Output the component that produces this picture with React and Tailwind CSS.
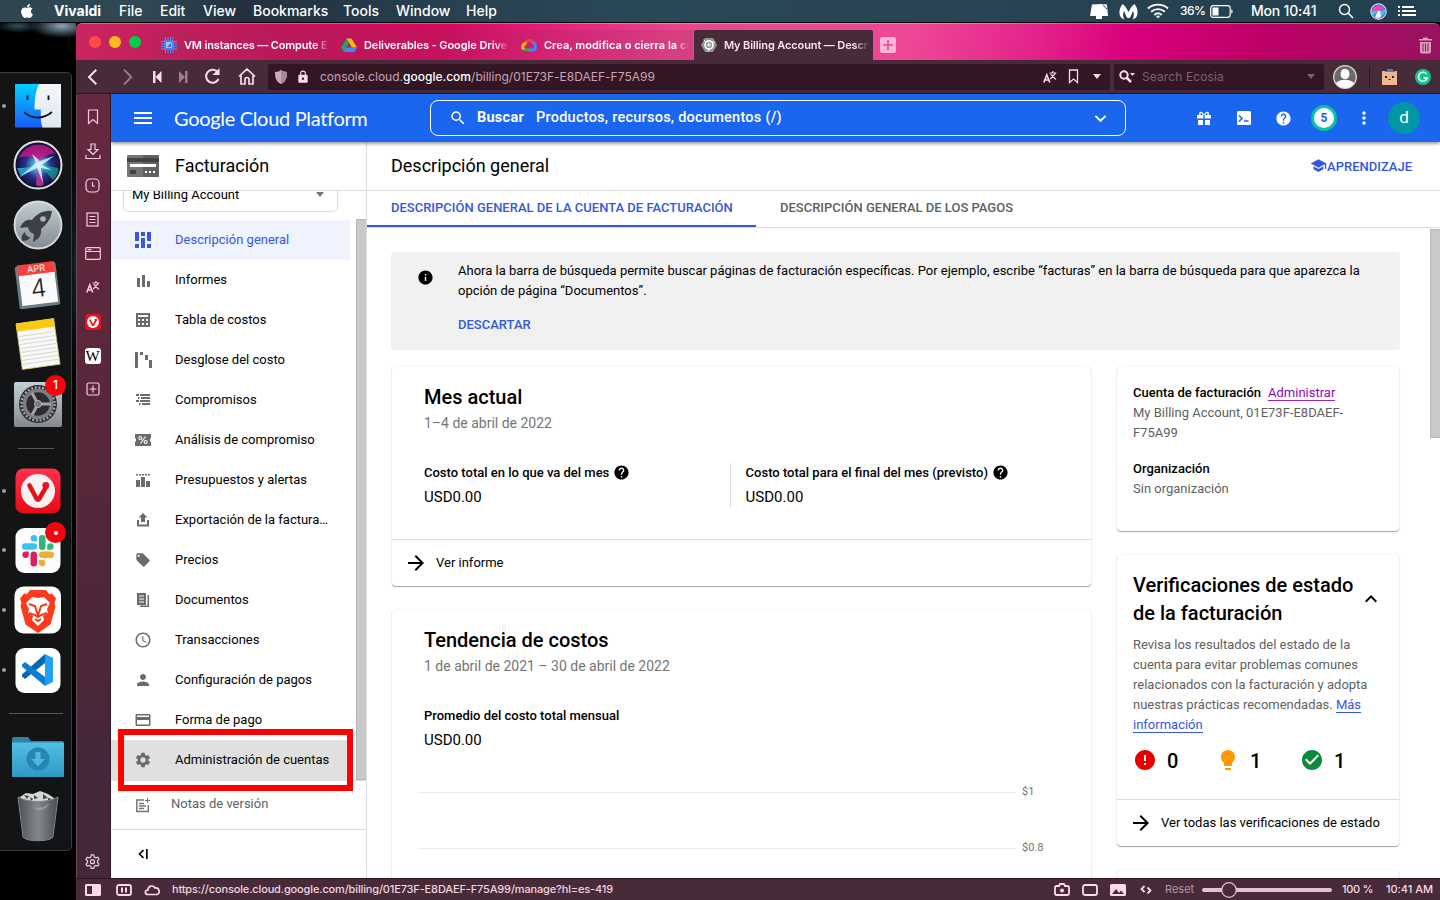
import React from "react";
import { FaApple } from "react-icons/fa";
import {
  MdAccessTime, MdArrowForward, MdCheckCircle, MdCreditCard, MdError,
  MdExpandLess, MdExpandMore, MdHelp, MdInfo, MdLightbulb, MdLocalOffer, MdLock, MdMenu,
  MdMoreVert, MdPerson, MdSchool, MdSearch, MdSettings,
} from "react-icons/md";

const Svg = ({ w = 18, h = w, vb, children, className = "" }) => (
  <svg width={w} height={h} viewBox={vb || `0 0 ${w} ${h}`} fill="currentColor" className={`block shrink-0 ${className}`}>{children}</svg>
);

/* ---------- macOS menu bar ---------- */
function MenuBar() {
  return (
    <div className="flex h-[23px] shrink-0 items-center border-b border-black bg-[linear-gradient(90deg,#2d4650_0%,#2f4954_10%,#232f3e_17%,#26404f_30%,#2a4856_45%,#284351_70%,#22404f_100%)] text-[14px] leading-[22px] font-medium text-white">
      <div className="flex w-[54px] justify-center"><FaApple size={16} /></div>
      <div className="w-[65px] font-bold">Vivaldi</div>
      <div className="w-[41px]">File</div>
      <div className="w-[43px]">Edit</div>
      <div className="w-[50px]">View</div>
      <div className="w-[90px]">Bookmarks</div>
      <div className="w-[53px]">Tools</div>
      <div className="w-[70px]">Window</div>
      <div className="w-[624px]">Help</div>
      <Svg w={18} h={16}><path d="M2 1.500 12 1 17 1.500 18 13H0Z" /><path d="m6 13h6v3H6z" /><path d="M13 1.500Q15 5 17 6" stroke="#2a4654" fill="none" /></Svg>
      <Svg w={19} h={17} className="ml-[11px]"><path d="M3.500 1C5.500 2 7.800 5.500 9.500 9 11.200 5.500 13.500 2 15.500 1 18 4 19 8 18.400 11.500 17.800 14 16 16 13.500 16.500 15.500 13.500 15 10 14 8c-1 2-2 5-3 6.500-1 .8-2 .8-3 0C7 13 6 10 5 8c-1 2-1.500 5.500.5 8.500C3 16 1.200 14 .6 11.500 0 8 1 4 3.500 1Z" /></Svg>
      <Svg w={22} h={16} className="ml-[9px]"><g fill="none" stroke="currentColor" strokeWidth="1.900"><path d="M1 5.500C6.500.3 15.500.3 21 5.500" /><path d="M4.200 8.800c3.900-3.600 9.700-3.600 13.600 0" /><path d="M7.300 12c2.200-2 5.200-2 7.400 0" /></g><path d="m11 15.500-2-2.200c1.200-1 2.800-1 4 0z" /></Svg>
      <div className="ml-[11px] w-[30px] text-[12px] tracking-[-0.5px]">36%</div>
      <Svg w={24} h={13}><rect x=".7" y=".7" width="19.500" height="11.600" rx="2.500" fill="none" stroke="currentColor" strokeWidth="1.200" /><rect x="2.500" y="2.500" width="6" height="8" /><path d="M21.300 4.500c1.800.5 1.800 3.500 0 4z" /></Svg>
      <div className="ml-[17px] w-[87px] tracking-[-0.2px]">Mon 10:41</div>
      <Svg w={16} h={16}><circle cx="6.500" cy="6.500" r="5" fill="none" stroke="currentColor" strokeWidth="1.400" /><path d="m10 10 5 5" stroke="currentColor" strokeWidth="1.600" /></Svg>
      <Svg w={17} h={17} className="ml-[16px]"><circle cx="8.500" cy="8.500" r="7.700" fill="#5a6fd8" stroke="#fff" /><path d="M2 8c2-6 10-7 12-2L9 8Z" fill="#f24ab4" /><path d="m9 8 6-1c0 4-3 7-6 7zM8 8 3 13C1 10 2 8 2 8Z" fill="#36c9e8" /><path d="m8 8 2 0 1 6-3 1-3-1Z" fill="#fff" /></Svg>
      <Svg w={19} h={12} className="ml-[11px]"><path d="M0 1h2v2H0zM4 1h12v2H4zM0 5h2v2H0zM4 5h14v2H4zM0 9h2v2H0zM4 9h14v2H4z" /></Svg>
    </div>
  );
}

/* ---------- Dock ---------- */
const Vmark = ({ cx, cy, s }) => (
  <g transform={`translate(${cx} ${cy}) scale(${s})`}>
    <path d="M-8.500-5.500-1.500 7.500Q0 10 1.500 7.500C3 4.500 5 1.500 7.500-3" fill="none" stroke="#e1141e" strokeWidth="4.600" strokeLinecap="round" strokeLinejoin="round" />
    <circle cx="7.800" cy="-5.500" r="3.400" fill="#e1141e" />
  </g>
);

const DockCell = ({ dot, children }) => (
  <div className="flex h-[59.6px] items-center">
    <span className={`ml-[2px] h-1 w-1 rounded-full ${dot ? "bg-[#9b9b9b]" : ""}`} />
    <div className="ml-[6px]">{children}</div>
  </div>
);

function Dock() {
  return (
    <div className="flex w-[76px] shrink-0 flex-col bg-black bg-[radial-gradient(ellipse_32px_12px_at_62px_3px,#86a6b6,transparent),radial-gradient(ellipse_22px_7px_at_18px_3px,#33505c,transparent),radial-gradient(ellipse_9px_120px_at_76px_240px,#10262c,transparent)] pt-[49px]">
      <div className="h-[779px] w-[72px] rounded-r-[5px] border border-l-0 border-[#3d3d3d] bg-[#131415] pt-[3px] text-white">
        <DockCell dot>
          <Svg w={52} h={52}><defs><linearGradient id="fb" x2="0" y2="1"><stop stopColor="#00d0ff" /><stop offset="1" stopColor="#1a5bf5" /></linearGradient><linearGradient id="fw" x2="0" y2="1"><stop stopColor="#f5f6f8" /><stop offset="1" stopColor="#dfe7f2" /></linearGradient></defs><rect x="3" y="4" width="46" height="43.500" rx="1" fill="url(#fb)" /><path d="M27 4h22v43.500H30.500c-1.300-4-1.700-7-1.700-11.500V29.500H22.500C22.500 19 23.500 11.500 27 4Z" fill="url(#fw)" /><path d="M12 32c8 7.500 19 7.500 28 0" stroke="#111" strokeWidth="1.700" fill="none" /><path d="M15.500 15.500v4.500M36.500 15.500v4.500" stroke="#111" strokeWidth="1.800" /></Svg>
        </DockCell>
        <DockCell>
          <Svg w={52} h={52}><defs><radialGradient id="si"><stop stopColor="#fff" /><stop offset=".2" stopColor="#4ab2dc" /><stop offset=".55" stopColor="#24308a" /><stop offset="1" stopColor="#140a2c" /></radialGradient></defs><circle cx="26" cy="26" r="23.500" fill="url(#si)" stroke="#dedede" strokeWidth="2" /><path d="M7 19C13 3 35 1 44 15 38 13 31 18 27 24 20 17 13 16 7 19Z" fill="#d7168a" opacity=".75" /><path d="M5 29c9 0 15-1 21-4L9 38Z" fill="#2fc5ee" opacity=".7" /><path d="m27 25 19 4c1 5-2 9-5 12Z" fill="#18cba7" opacity=".55" /><path d="m25 25 7 20c-3 3-6 2-8 1Z" fill="#e6379e" opacity=".7" /><path d="M9 37 24 24 20 15 28 22 42 17 30 26 40 31 29 29 31 44 25 29Z" fill="#dffbff" opacity=".8" /></Svg>
        </DockCell>
        <DockCell>
          <Svg w={52} h={52}><defs><linearGradient id="rk" x2="0" y2="1"><stop stopColor="#c3cfd4" /><stop offset="1" stopColor="#848b90" /></linearGradient></defs><circle cx="26" cy="26" r="23.500" fill="url(#rk)" stroke="#d9dcde" strokeWidth="1.800" /><path d="M40 12c-9-1-15 3-20 9-5-1-9 1-12 8l8-1c0 3 3 6 6 7l-1 8c6-3 9-7 8-13 6-5 10-10 11-18ZM13 33c-3 2-4 5-3 9 4 0 7-1 8-4-2 0-5-2-5-5Z" fill="#3d4146" /><circle cx="31" cy="20" r="2.800" fill="#aab5ba" /></Svg>
        </DockCell>
        <DockCell>
          <Svg w={52} h={52}><g transform="rotate(-7 26 26)"><rect x="5" y="5" width="41" height="43" rx="2" fill="#6d7b83" /><rect x="8" y="5" width="36" height="40" fill="#fafafa" /><rect x="7.500" y="4" width="37" height="11" fill="#f5413d" /><text x="26" y="12.600" textAnchor="middle" fontSize="9" fill="#fff" fontFamily="Inter, sans-serif">APR</text><text x="26" y="38" textAnchor="middle" fontSize="25" fill="#222" fontWeight="300" fontFamily="Inter, sans-serif">4</text></g></Svg>
        </DockCell>
        <DockCell>
          <Svg w={52} h={52}><g transform="rotate(-8 26 26)"><rect x="7" y="3" width="38" height="46" fill="#f8f8f5" stroke="#d5c87a" strokeWidth=".8" /><rect x="7" y="3" width="38" height="8" fill="#fbc912" /><path d="M8 16h36M8 20h36M8 24h36M8 28h36M8 32h36M8 36h36M8 40h36M8 44h36" stroke="#cfd1d4" strokeWidth=".8" /></g></Svg>
        </DockCell>
        <DockCell>
          <div className="relative">
            <Svg w={52} h={52}><rect x="2" y="4" width="48" height="45" rx="2" fill="url(#rk)" /><circle cx="26" cy="26" r="19" fill="#2a2c2f" /><circle cx="26" cy="26" r="16.500" fill="none" stroke="#a5a7a9" strokeWidth="2.500" strokeDasharray="2 1.700" /><circle cx="26" cy="26" r="13.500" fill="none" stroke="#7c7e80" strokeWidth="3.500" /><path d="m26 26-6-11m6 11 13 0m-13 0-6 11" stroke="#a2a4a6" strokeWidth="3" /><circle cx="26" cy="26" r="3.500" fill="#777" stroke="#b5b5b5" /></Svg>
            <span className="absolute top-[-3px] right-[-2px] flex h-[21px] w-[21px] items-center justify-center rounded-full bg-[#f50410] text-[12px] font-medium">1</span>
          </div>
        </DockCell>
        <div className="flex h-[27.4px] items-center pt-[2px] pl-[18px]"><div className="h-px w-9 bg-[#565656]" /></div>
        <DockCell dot>
          <Svg w={52} h={52}><defs><linearGradient id="vr" x2="0" y2="1"><stop stopColor="#ff3150" /><stop offset="1" stopColor="#e80a10" /></linearGradient></defs><rect x="3.500" y="3.500" width="45" height="45" rx="8" fill="url(#vr)" /><circle cx="26" cy="26" r="17" fill="#fbf0f2" /><Vmark cx={26} cy={26} s={1} /></Svg>
        </DockCell>
        <DockCell dot>
          <div className="relative">
            <Svg w={52} h={52}><rect x="3.500" y="4" width="45" height="45" rx="9" fill="#fcfcfc" /><g transform="translate(26 26.500)"><rect x="-16" y="-7.300" width="15" height="6.500" rx="3.200" fill="#36c5f0" /><path d="M-1-9h-3.200a3.200 3.200 0 1 1 3.200-3.200Z" fill="#36c5f0" /><rect x="1" y="-15.500" width="6.500" height="15" rx="3.200" fill="#2eb67d" /><path d="M9.200-.8v-3.200a3.200 3.200 0 1 1 3.200 3.200Z" fill="#2eb67d" /><rect x="1" y="1" width="15" height="6.500" rx="3.200" fill="#ecb22e" /><path d="M1 9.200h3.200a3.200 3.200 0 1 1-3.200 3.200Z" fill="#ecb22e" /><rect x="-7.500" y="1" width="6.500" height="15" rx="3.200" fill="#e01e5a" /><path d="M-9.200 1v3.200a3.200 3.200 0 1 1-3.200-3.200Z" fill="#e01e5a" /></g></Svg>
            <span className="absolute top-[-2px] right-[-2px] flex h-[21px] w-[21px] items-center justify-center rounded-full bg-[#f50410]"><span className="h-1 w-1 rounded-full bg-white" /></span>
          </div>
        </DockCell>
        <DockCell dot>
          <Svg w={52} h={52}><rect x="2.500" y="2.500" width="46.500" height="47" rx="9" fill="#fff" /><path d="m18 6 16 0 3 4 3-.5 4 5-1.500 5 1 3-5 18-12.500 8.500L13.500 40.500 8.500 22l1-3L8 14.500l4-5 3 .5Z" fill="#fb3b1b" /><path d="m20 13 6 1 6-1 6 6-3 6 1 4-5 3 1 4-6 6-6-6 1-4-5-3 1-4-3-6Z" fill="#fff" /><path d="m17 20 6 2 3 10 3-10 6-2m-18 9 6 2 3 2 3-2 6-2m-12 6 3 2 3-2" stroke="#f4381a" strokeWidth="1.900" fill="none" /></Svg>
        </DockCell>
        <DockCell dot>
          <Svg w={52} h={52}><rect x="3.500" y="4" width="45" height="45" rx="9" fill="#fff" /><path d="m33 10 8 4v24l-8 4Z" fill="#22a0f5" /><path d="M33 10v9L13 35l-3-2.500v-2Z" fill="#0569b2" /><path d="M33 42v-9L13 18l-3 2.500v2Z" fill="#0b7cd0" /></Svg>
        </DockCell>
        <div className="flex h-[28.4px] items-center pl-[9px]"><div className="h-px w-[54px] bg-[#565656]" /></div>
        <DockCell>
          <Svg w={54} h={52}><defs><linearGradient id="fo" x2="0" y2="1"><stop stopColor="#53bfe4" /><stop offset="1" stopColor="#2e99c6" /></linearGradient></defs><path d="M0 7q0-2 2-2h14l3 4h31q2 0 2 2v6H0Z" fill="#2f83a7" /><rect y="10.500" width="52" height="34.500" rx="1" fill="url(#fo)" /><circle cx="26" cy="27" r="11.500" fill="#2687b2" /><path d="M23.500 20h5v7H33l-7 7.500L19 27h4.500Z" fill="#52b7dc" /></Svg>
        </DockCell>
        <DockCell>
          <Svg w={52} h={56}><defs><linearGradient id="tr"><stop stopColor="#4e5053" /><stop offset=".5" stopColor="#85888a" /><stop offset="1" stopColor="#4b4d50" /></linearGradient></defs><path d="m8 8 6-4 7 1 7-3 8 3 6 4-4 7H11Z" fill="#d7d7d7" /><path d="m12 6 5 1-2 3zM31 5l5 4-5 1zM22 6l4 3-4 1zM18 8l3 2-2 2zM36 9l4 1-4 2z" fill="#3c4a50" /><path d="M6 8c10 6 30 6 40 0L41 48c-3 5-27 5-30 0Z" fill="url(#tr)" stroke="#818486" /><path d="M21 18c5 2 12 0 16-4-2 7-10 10-16 4Z" fill="#a9acad" opacity=".6" /></Svg>
        </DockCell>
      </div>
    </div>
  );
}

/* ---------- Browser chrome ---------- */
const Translate = () => (
  <Svg w={14} h={14}><path d="m.8 12.500 3-7.500 3 7.500M2 10h4" fill="none" stroke="currentColor" strokeWidth="1.600" /><path d="M6.500 3h6.800M9.900 1v2M7.600 4.200 12.800 9.500M12.300 3.700 7.200 9" fill="none" stroke="currentColor" strokeWidth="1.200" /></Svg>
);
const BookmarkLine = () => <Svg w={11} h={15}><path d="M1.500 1h8v12.500l-4-3.500-4 3.500Z" fill="none" stroke="currentColor" strokeWidth="1.300" /></Svg>;
const Caret = ({ className }) => <Svg w={8} h={5} className={className}><path d="M0 0h8L4 5Z" /></Svg>;

const TABS = [
  { title: "VM instances — Compute Engine", fit: "tracking-[-0.15px]", icon: <Svg w={16}><g fill="none" stroke="#5a8cf5"><path d="M4.500 0v16M7 0v16M9.500 0v16M12 0v16M0 4.500h16M0 7h16M0 9.500h16M0 12h16" /></g><rect x="3" y="3" width="10" height="10" fill="#4a7df0" /><rect x="5" y="5" width="6" height="6" fill="#a3c1fb" /><path d="M6 10 10 6v4Z" fill="#3367d6" /></Svg> },
  { title: "Deliverables - Google Drive", fit: "tracking-[-0.08px]", icon: <Svg w={16}><path d="M5.500 1.500h5L16 10.500h-5Z" fill="#fbbc04" /><path d="M5.500 1.500 8 6 2.800 15 0 10.500Z" fill="#1fa463" /><path d="M2.800 15 5.500 10.500H16L13.300 15Z" fill="#4688f4" /></Svg> },
  { title: "Crea, modifica o cierra la cuenta", fit: "tracking-[0.02px]", icon: <Svg w={16}><g fill="none" strokeWidth="3"><path d="M4 6.500C5.500 2.500 10 2.500 12 5.500" stroke="#ea4335" /><path d="M11.500 5c2 1 3 3 3 5 0 2-1.500 3-3 3H8" stroke="#4285f4" /><path d="M3 11.800c1 1 2 1.200 5 1.200" stroke="#34a853" /><path d="M5.500 6.500C3 6.500 1.700 8 1.700 9.700c0 1 .5 2 1.300 2.500" stroke="#fbbc04" /></g></Svg> },
];
const GreyHex = () => <Svg w={16}><path d="M4 1h8l4 7-4 7H4L0 8Z" fill="#8e9490" /><circle cx="8" cy="8" r="4" fill="none" stroke="#f4f4f4" strokeWidth="1.800" /><circle cx="8" cy="8" r="1.800" fill="#e3e3e3" /><path d="M4.800 5.500 2.800 2.500M11 5l3 0M8 12l-1 3" stroke="#f4f4f4" /></Svg>;

function TabBar() {
  return (
    <div className="flex h-[37px] items-end rounded-t-[6px] border-t border-white/30 bg-[linear-gradient(100deg,#c9265f_0%,#c3125c_15%,#d4085f_27%,#e41c7b_34%,#e8468f_44%,#ee4896_61%,#e3248b_70%,#d9007c_77%,#bd0066_87%,#96135f_100%)] text-[11px] font-semibold text-white">
      <div className="mb-[12px] flex w-[78px] gap-2 pl-[13px]">
        <span className="h-3 w-3 rounded-full bg-[#ff4a4d]" /><span className="h-3 w-3 rounded-full bg-[#fdbc1e]" /><span className="h-3 w-3 rounded-full bg-[#00ce4b]" />
      </div>
      {TABS.map((t) => (
        <div key={t.title} className="mr-px flex h-[30px] w-[179px] items-center bg-[#9a3058]/25 pl-[7px]">
          {t.icon}
          <div className={`ml-[7px] w-[145px] overflow-hidden whitespace-nowrap [mask-image:linear-gradient(90deg,#000_90%,transparent_100%)] ${t.fit}`}>{t.title}</div>
        </div>
      ))}
      <div className="flex h-[30px] w-[179px] items-center rounded-t-[2px] bg-[#472b38] pl-[7px]">
        <GreyHex />
        <div className="ml-[7px] w-[145px] overflow-hidden whitespace-nowrap tracking-[-0.12px] text-[#ffe0ee] [mask-image:linear-gradient(90deg,#000_90%,transparent_100%)]">My Billing Account — Descripción</div>
      </div>
      <Svg w={16} className="mb-[7px] ml-[7px] text-[#fbb6d8]"><rect width="16" height="16" rx="2.500" /><path d="M8 3v10M3 8h10" stroke="#f0469a" strokeWidth="1.700" /></Svg>
      <Svg w={13} h={17} className="mr-2 mb-[6px] ml-auto text-[#dc9dbc]"><path d="M0 2h4V.5h5V2h4v1.500H0zM1 5h11v9.500q0 2-2 2H3q-2 0-2-2Z" /><path d="M4 6.500v8M6.500 6.500v8M9 6.500v8" stroke="#90135a" /></Svg>
    </div>
  );
}

function Toolbar() {
  return (
    <div className="flex h-[34px] items-center border-b border-[#2a1220] bg-[#472b38] text-[#fcdcec]">
      <Svg w={10} h={16} className="ml-[11px]"><path d="M9.300.7 2 8l7.300 7.300" fill="none" stroke="currentColor" strokeWidth="2" /></Svg>
      <Svg w={10} h={16} className="ml-[26px] text-[#a07c8e]"><path d="m1 .7 7.300 7.300L1 15.300" fill="none" stroke="currentColor" strokeWidth="1.800" /></Svg>
      <Svg w={9} h={12} className="ml-[20px]"><path d="M0 0h2.500v12H0zM8.500 0v12L2.500 6Z" /></Svg>
      <Svg w={9} h={12} className="ml-[17px] text-[#a07c8e]"><path d="M6 0h2.500v12H6zM0 0v12L6 6Z" /></Svg>
      <Svg w={17} h={17} className="ml-[16px]"><path d="M14.500 11A6.500 6.500 0 1 1 13 3.500" fill="none" stroke="currentColor" strokeWidth="2" /><path d="M15.500 0v7h-7Z" /></Svg>
      <Svg w={18} h={17} className="ml-[17px]"><path d="M1 8.500 9 1l8 7.500M3 7.500V16h4v-4.500q0-2 2-2t2 2V16h4V7.500" fill="none" stroke="currentColor" strokeWidth="1.700" /></Svg>
      <div className="ml-[12px] flex h-[26px] w-[842px] items-center rounded-[3px] bg-[#321624] pr-[9px] pl-[7px]">
        <Svg w={12} h={14}><path d="M0 2Q4 2 6 0q2 2 6 2c0 6-1 9.500-6 12C1 11.500 0 8 0 2Z" fill="#caa9ba" /><path d="M6 0q2 2 6 2c0 6-1 9.500-6 12Z" fill="#a5889a" /></Svg>
        <MdLock size={14} className="ml-[9px]" />
        <div className="ml-[10px] flex-1 text-[12px] tracking-[0.01px] text-[#c8a4b6]">console.cloud.<span className="font-medium text-white">google.com</span>/billing/01E73F-E8DAEF-F75A99</div>
        <Translate /><div className="w-[11px]" /><BookmarkLine /><Caret className="ml-[14px]" />
      </div>
      <div className="ml-1 flex h-[26px] w-[210px] items-center rounded-[3px] bg-[#321624] pr-[9px] pl-[5px]">
        <Svg w={16} h={13}><circle cx="5" cy="5" r="3.700" fill="none" stroke="currentColor" strokeWidth="2" /><path d="m7.500 7.500 4.500 4.500" stroke="currentColor" strokeWidth="2.500" /><path d="M11 3h5l-2.500 3Z" /></Svg>
        <div className="ml-[7px] flex-1 text-[12px] tracking-[0.1px] text-[#7d6170]">Search Ecosia</div>
        <Caret className="text-[#7d6170]" />
      </div>
      <Svg w={24} className="ml-[9px]"><defs><clipPath id="avatar"><circle cx="12" cy="12" r="11" /></clipPath></defs><circle cx="12" cy="12" r="11.300" fill="#6b6b6b" stroke="#d9d9d9" strokeWidth="1.300" /><g fill="#fff" clipPath="url(#avatar)"><ellipse cx="12" cy="9" rx="4.500" ry="5.200" /><path d="M1 24c0-7 5-8 8-9h6c3 1 8 2 8 9Z" /></g></Svg>
      <div className="ml-[12px] h-[22px] w-px bg-[#2d1722]" />
      <Svg w={15} h={16} className="ml-[12px]"><rect x="0" y="2" width="15" height="14" fill="#f0b88a" /><path d="M5 0h6v2h2v1H3V2h2z" fill="#2f81e8" /><path d="M3 7h2v2H3zM10 7h2v2h-2zM6.500 10h2v1h-2z" fill="#3b2020" /></Svg>
      <Svg w={16} className="ml-[18px]"><circle cx="8" cy="8" r="8" fill="#11c58c" /><path d="M11.500 5A4.500 4.500 0 1 0 12.300 9H8.500" fill="none" stroke="#fff" strokeWidth="1.500" /></Svg>
    </div>
  );
}

const PanelCell = ({ children }) => <div className="flex h-[34px] items-center justify-center">{children}</div>;
const line = { fill: "none", stroke: "currentColor", strokeWidth: 1.2 };

function PanelBar() {
  return (
    <div className="flex w-[35px] shrink-0 flex-col border-r border-l border-r-[#3a1527] border-l-[#6c4a58] bg-[linear-gradient(180deg,#65293f_0%,#572639_50%,#44283a_85%,#43273a_100%)] pt-[6px] pr-[2px] text-[#f5cde0]">
      <PanelCell><Svg w={12} h={16}><path d="M1.500 1h9v13.500L6 10.500 1.500 14.500Z" {...line} /></Svg></PanelCell>
      <PanelCell><Svg w={16} h={17}><path d="M6 1h4v5.500h3l-5 5-5-5h3ZM1 12v3.500h14V12" {...line} /></Svg></PanelCell>
      <PanelCell><Svg w={15}><rect x="1" y="1" width="13" height="13" rx="4" {...line} /><path d="M7.500 4v4H10" {...line} /></Svg></PanelCell>
      <PanelCell><Svg w={13} h={15}><rect x="1" y="1" width="11" height="13" {...line} /><path d="M3.500 4.500h6M3.500 7.500h6M3.500 10.500h6" {...line} /></Svg></PanelCell>
      <PanelCell><Svg w={16} h={13}><rect x=".7" y=".7" width="14.600" height="11.600" rx="1" {...line} /><path d="M1 4.500h14M2.500 2.700h4" {...line} /></Svg></PanelCell>
      <PanelCell><Translate /></PanelCell>
      <PanelCell><Svg w={16} className="mt-px"><rect width="16" height="16" rx="3.500" fill="#f30b1d" /><circle cx="8" cy="8" r="6" fill="#fff" /><Vmark cx={8} cy={8} s={0.36} /></Svg></PanelCell>
      <PanelCell><div className="mt-[2px] flex h-4 w-4 items-center justify-center rounded-[3px] bg-white font-['Liberation_Serif',serif] text-[15px] leading-4 text-black">W</div></PanelCell>
      <PanelCell><Svg w={14}><rect x="1" y="1" width="12" height="12" rx="1.500" {...line} /><path d="M7 3.500v7M3.500 7h7" {...line} /></Svg></PanelCell>
      <div className="mt-auto flex h-[33px] items-center justify-center">
        <Svg w={15} vb="0 0 24 24"><path d="M10 1.500h4l.7 3.300 2.500 1.400 3.200-1 2 3.400-2.400 2.300v2.800l2.400 2.300-2 3.400-3.200-1-2.500 1.400-.7 3.300h-4l-.7-3.300-2.500-1.400-3.200 1-2-3.400L4 13.700v-2.800L1.600 8.600l2-3.400 3.200 1 2.500-1.400Z" fill="none" stroke="currentColor" strokeWidth="1.900" /><circle cx="12" cy="12.200" r="3.200" fill="none" stroke="currentColor" strokeWidth="1.900" /></Svg>
      </div>
    </div>
  );
}

function StatusBar() {
  return (
    <div className="flex h-[22px] shrink-0 items-center border-t border-[#2e1522] bg-[#472b38] text-[11px] text-[#fcd9ea]">
      <Svg w={16} h={12} className="ml-[9px]"><path d="M1.500 0h13Q16 0 16 1.500v9q0 1.500-1.500 1.500h-13Q0 12 0 10.500v-9Q0 0 1.500 0ZM2 2v8h5V2Z" fillRule="evenodd" /></Svg>
      <Svg w={16} h={12} className="ml-[15px]"><rect x="1" y="1" width="14" height="10" rx="2" fill="none" stroke="currentColor" strokeWidth="1.800" /><path d="M5 3.500h2v5H5zM9 3.500h2v5H9z" /></Svg>
      <Svg w={17} h={12} className="ml-[12px]"><path d="M4 10.500C.5 10.500.5 6 4 6 4 2 9 .5 11 4c4-1 6 5.500 2 6.500Z" fill="none" stroke="currentColor" strokeWidth="1.700" /></Svg>
      <div className="ml-[11px] flex-1 font-medium tracking-[-0.15px] text-[#f3d3e1]">https://console.cloud.google.com/billing/01E73F-E8DAEF-F75A99/manage?hl=es-419</div>
      <Svg w={16} h={13}><path d="M1 4.500Q1 3 2.500 3H5l1-2h4l1 2h2.500Q15 3 15 4.500v6q0 1.500-1.500 1.500h-11Q1 12 1 10.500Z" fill="none" stroke="currentColor" strokeWidth="1.800" /><circle cx="8" cy="7.500" r="2" /></Svg>
      <Svg w={16} h={12} className="ml-[12px]"><rect x="1" y="1" width="14" height="10" rx="2" fill="none" stroke="currentColor" strokeWidth="1.800" /></Svg>
      <Svg w={16} h={12} className="ml-[12px]"><rect width="16" height="12" rx="1.500" /><path d="m2 10 4-5 3 4 2-2.500 3 3.500Z" fill="#472b38" /></Svg>
      <Svg w={12} h={9} className="ml-[14px]"><path d="M4.500 1 1.500 4l3 3M7.500 2.500l3 3-3 3" fill="none" stroke="currentColor" strokeWidth="1.800" /></Svg>
      <div className="ml-[13px] w-[37px] text-[#b994a7]">Reset</div>
      <Svg w={130} h={16}><path d="M2 8h126" stroke="#e9bfd3" strokeWidth="4" strokeLinecap="round" /><circle cx="27" cy="8" r="7.300" fill="#472b38" stroke="#e9bfd3" strokeWidth="1.300" /></Svg>
      <div className="ml-[10px] w-[44px] font-medium tracking-[-0.3px]">100 %</div>
      <div className="w-[54px] font-medium whitespace-nowrap tracking-[-0.05px]">10:41 AM</div>
    </div>
  );
}

/* ---------- Cloud console ---------- */
function ConsoleHeader() {
  return (
    <div className="z-10 flex h-[48px] shrink-0 items-center bg-[#1a66ee] text-white shadow-[0_1px_4px_rgba(0,0,0,0.55)]">
      <MdMenu size={24} className="ml-[20px]" />
      <div className="ml-[19px] w-[256px] pb-px font-['Lato','Open_Sans',sans-serif] text-[20px] tracking-[-0.32px] whitespace-nowrap">Google Cloud Platform</div>
      <div className="flex h-[36px] w-[696px] items-center rounded-[8px] border border-white pr-[13px] pl-[18px] text-[14.5px] font-medium">
        <MdSearch size={18} />
        <span className="ml-[10px] w-[59px] font-bold tracking-[0.25px]">Buscar</span>
        <span className="flex-1 tracking-[0.25px]">Productos, recursos, documentos (/)</span>
        <MdExpandMore size={23} />
      </div>
      <Svg w={14} className="ml-[71px]"><path d="M0 4h14v3.500H0zM1 9h5.200v5H1zM7.800 9H13v5H7.800z" /><path d="M6.500 4C5 .5 2 .5 3 4M7.500 4C9 .5 12 .5 11 4" fill="none" stroke="currentColor" strokeWidth="1.400" /><path d="M7 4v10" stroke="#1a66ee" strokeWidth="1.300" /></Svg>
      <Svg w={14} className="ml-[26px]"><rect width="14" height="14" rx="1.500" /><path d="m2 4.500 3 3-3 3M7 10h4.500" fill="none" stroke="#1a66ee" strokeWidth="1.600" /></Svg>
      <MdHelp size={17} className="ml-[24px]" />
      <div className="ml-[19px] flex h-[26px] w-[26px] items-center justify-center rounded-full border-[3px] border-[#0cc2a2] bg-white text-[12px] font-bold text-[#1a66ee]">5</div>
      <MdMoreVert size={20} className="ml-[17px]" />
      <div className="ml-[14px] flex h-8 w-8 items-center justify-center rounded-full bg-[#0097a7] pb-px text-[17px]">d</div>
    </div>
  );
}

const NAV = [
  ["Descripción general", <Svg><path d="M1 1h4v9H1zM1 13h4v4H1zM7 1h4v4H7zM7 7h4v10H7zM13 1h4v9h-4zM13 13h4v4h-4z" /></Svg>],
  ["Informes", <Svg><path d="M3 7h3v9H3zM8 4h3v12H8zM13 10h3v6h-3z" /></Svg>],
  ["Tabla de costos", <Svg><path fillRule="evenodd" d="M2 2h14v14H2ZM4 4v2h10V4ZM4 8v2h2V8ZM8 8v2h2V8ZM12 8v2h2V8ZM4 12v2h2v-2ZM8 12v2h2v-2ZM12 12v2h2v-2Z" /></Svg>],
  ["Desglose del costo", <Svg><path d="M1 1h3v16H1zM6 1h3v3H6zM11 4h3v5h-3zM15 9h3v8h-3z" /></Svg>],
  ["Compromisos", <Svg><path d="M2 3h3v2H2zM6 3h10v2H6zM4 6h1.500v2H4zM7 6h9v2H7zM2 9h3v2H2zM6 9h10v2H6zM5 12h1.500v2H5zM8 12h8v2H8z" /></Svg>],
  ["Análisis de compromiso", <Svg><rect x="1" y="3" width="16" height="12" /><g fill="none" stroke="#fff" strokeWidth="1.100"><circle cx="6.300" cy="7" r="1.500" /><circle cx="11.700" cy="11" r="1.500" /><path d="m6.500 12.500 5-7" /></g><path d="M1 7.500h1v3H1zM16 7.500h1v3h-1z" fill="#fff" /></Svg>],
  ["Presupuestos y alertas", <Svg><path d="M2 3h2v1.500H2zM5 3h2v1.500H5zM8 3h2v1.500H8zM11 3h2v1.500h-2zM14 3h2v1.500h-2zM2 9h4v7H2zM7 6h4v10H7zM12 10h4v6h-4z" /></Svg>],
  ["Exportación de la factura…", <Svg><path d="M3 9h2v4.500h8V9h2v6.500H3ZM9 2l4.500 4.500H11V11H7V6.500H4.500Z" /></Svg>],
  ["Precios", <MdLocalOffer size={16} className="mx-px" />],
  ["Documentos", <Svg><path fillRule="evenodd" d="M3 2h9v12H3ZM5 4.500v1h5v-1ZM5 7.500v1h5v-1ZM5 10.500v1h5v-1Z" /><path d="M13.500 4H15v12H6v-1.500h7.500Z" /></Svg>],
  ["Transacciones", <MdAccessTime size={18} />],
  ["Configuración de pagos", <MdPerson size={18} />],
  ["Forma de pago", <MdCreditCard size={18} />],
  ["Administración de cuentas", <MdSettings size={18} />],
];

function SideNav() {
  return (
    <div className="relative flex w-[256px] shrink-0 flex-col border-r border-[#dadce0]">
      <div className="flex h-[49px] shrink-0 items-center border-b border-[#dadce0] pl-4 text-[18px] text-black">
        <Svg w={32} h={22}><rect width="32" height="22" rx="1" fill="#757575" /><path d="M16 0h15q1 0 1 1v20q0 1-1 1H16Z" fill="#616161" /><path d="M0 3h32v4H0z" fill="#424242" /><path d="M3 9h26v3H3z" fill="#fff" /><path d="M3 15h6v4H3z" fill="#424242" /><path d="M18 16h2v2h-2zM22 16h2v2h-2zM26 16h2v2h-2z" fill="#fff" /></Svg>
        <span className="ml-4 pb-[2px]">Facturación</span>
      </div>
      <div className="flex h-[590px] shrink-0 overflow-hidden border-b border-[#dadce0]">
        <div className="w-[239px]">
          <div className="mb-[8px] ml-[12px] flex h-[21px] w-[215px] items-start justify-between rounded-b-[5px] border border-t-0 border-[#dadce0] pr-[13px] pl-[8px] text-[13px] leading-[20px] text-black">
            <span className="mt-[-6px]">My Billing Account</span>
            <Caret className="mt-[1px] text-[#757575]" />
          </div>
          {NAV.map(([label, icon], i) => (
            <div
              key={label}
              className={`flex h-10 items-center pl-[23px] text-[13px] whitespace-nowrap ${i === 0 ? "bg-[#eef3fe] text-[#3558dc]" : i === 13 ? "bg-[#e0e0e0] text-[#6b6b6b]" : "text-[#6b6b6b]"}`}
            >
              {icon}
              <span className={`ml-[23px] ${i === 0 ? "" : "text-black"}`}>{label}</span>
            </div>
          ))}
        </div>
        <div className="mt-[28px] ml-[6px] h-[561px] w-[10px] border border-r-0 border-[#b5b5b5] bg-[#c9c9c9]" />
      </div>
      <div className="flex h-[49px] shrink-0 items-center border-b border-[#dadce0] pl-[23px] text-[13px] text-[#5f5f5f]">
        <Svg><g fill="none" stroke="#757575" strokeWidth="1.500"><path d="M10 4H2.800v11.500h11.500V9" /><path d="M5 7.500h5M5 10h7M5 12.500h5" /><path d="M13.500 2v5M11 4.500h5" strokeWidth="1.100" /></g></Svg>
        <span className="mb-[2px] ml-[19px]">Notas de versión</span>
      </div>
      <Svg w={10} h={10} className="mt-[19px] ml-[27px] text-black"><path d="m5.500 1-4 4 4 4" fill="none" stroke="currentColor" strokeWidth="1.700" /><path d="M8 0h1.700v10H8z" /></Svg>
      <div className="absolute top-[587px] left-[7px] h-[62px] w-[235px] border-[6px] border-[#fe0000]" />
    </div>
  );
}

const Card = ({ className, children }) => (
  <div className={`rounded-[4px] bg-white shadow-[0_1px_1px_rgba(0,0,0,0.35),0_0_2px_rgba(0,0,0,0.12)] ${className}`}>{children}</div>
);

function Main() {
  return (
    <div className="flex min-w-0 flex-1 flex-col text-[13px] leading-5 text-black">
      <div className="flex h-[49px] shrink-0 items-center justify-between border-b border-[#dadce0] pr-[28px] pl-6">
        <span className="text-[18px]">Descripción general</span>
        <span className="flex items-center pt-px font-medium text-[#3558dc]"><MdSchool size={17} className="mb-[3px]" />APRENDIZAJE</span>
      </div>
      <div className="flex h-[37px] shrink-0 border-b border-[#dadce0] font-medium">
        <div className="h-[36px] w-[389px] border-b-2 border-[#3558dc] pt-[7px] pl-6 whitespace-nowrap text-[#3558dc]">DESCRIPCIÓN GENERAL DE LA CUENTA DE FACTURACIÓN</div>
        <div className="pt-[7px] pl-6 text-[#5f5f5f]">DESCRIPCIÓN GENERAL DE LOS PAGOS</div>
      </div>
      <div className="flex min-h-0 flex-1 overflow-hidden">
        <div className="w-[1033px] shrink-0 pt-[24px] pl-6">
          <div className="flex h-[98px] rounded-[4px] bg-[#f1f1f1] pl-[26px]">
            <MdInfo size={17} className="mt-[17px]" />
            <div className="ml-[24px] w-[920px] pt-[9px]">
              <div>Ahora la barra de búsqueda permite buscar páginas de facturación específicas. Por ejemplo, escribe “facturas” en la barra de búsqueda para que aparezca la opción de página “Documentos”.</div>
              <div className="mt-[14px] font-medium text-[#3558dc]">DESCARTAR</div>
            </div>
          </div>
          <div className="mt-[17px] flex gap-[26px] pl-px">
            <div className="flex w-[699px] flex-col gap-6">
              <Card className="h-[219px]">
                <div className="h-[173px] border-b border-[#dadce0] pt-[17px] pl-8">
                  <div className="text-[20px] leading-[26px] font-medium">Mes actual</div>
                  <div className="mt-[3px] text-[14px] text-[#757575]">1–4 de abril de 2022</div>
                  <div className="mt-[30px] flex">
                    <div className="w-[307px] border-r border-[#dadce0]">
                      <div className="flex items-center font-medium">Costo total en lo que va del mes<MdHelp size={17} className="mb-[2px] ml-[4px]" /></div>
                      <div className="mt-[4px] text-[15px]">USD0.00</div>
                    </div>
                    <div className="pl-[14.6px]">
                      <div className="flex items-center font-medium">Costo total para el final del mes (previsto)<MdHelp size={17} className="mb-[2px] ml-[4px]" /></div>
                      <div className="mt-[4px] text-[15px]">USD0.00</div>
                    </div>
                  </div>
                </div>
                <div className="flex h-[46px] items-center pb-px pl-[12px]"><MdArrowForward size={24} /><span className="ml-2">Ver informe</span></div>
              </Card>
              <Card className="h-[300px] pt-[17px]">
                <div className="pl-8">
                  <div className="text-[20px] leading-[26px] font-medium">Tendencia de costos</div>
                  <div className="mt-[3px] text-[14px] text-[#757575]">1 de abril de 2021 – 30 de abril de 2022</div>
                  <div className="mt-[30px] font-medium">Promedio del costo total mensual</div>
                  <div className="mt-[4px] text-[15px]">USD0.00</div>
                </div>
                <div className="mt-[32px] ml-[26px] flex flex-col gap-9 text-[11px] text-[#757575]">
                  <div className="flex items-center"><div className="mr-[6px] h-px w-[598px] bg-[#ebebeb]" />$1</div>
                  <div className="flex items-center"><div className="mr-[6px] h-px w-[598px] bg-[#ebebeb]" />$0.8</div>
                </div>
              </Card>
            </div>
            <div className="flex w-[282px] flex-col gap-6">
              <Card className="h-[164px] pt-4 pl-4 text-[#5f5f5f]">
                <div><span className="mr-[7px] font-medium text-black">Cuenta de facturación</span><span className="border-b border-[#9c27b0] text-[#8e07a8]">Administrar</span></div>
                <div className="w-[240px]">My Billing Account, 01E73F-E8DAEF-F75A99</div>
                <div className="mt-4 font-medium text-black">Organización</div>
                <div>Sin organización</div>
              </Card>
              <Card className="h-[291px]">
                <div className="h-[245px] border-b border-[#dadce0] pt-4 pl-4">
                  <div className="flex items-center text-[20px] leading-[28px] font-medium"><div className="w-[226px] whitespace-nowrap">Verificaciones de estado<br />de la facturación</div><MdExpandLess size={24} /></div>
                  <div className="mt-2 w-[248px] text-[#5f5f5f]">Revisa los resultados del estado de la cuenta para evitar problemas comunes relacionados con la facturación y adopta nuestras prácticas recomendadas. <span className="border-b border-[#3558dc] text-[#3558dc]">Más información</span></div>
                  <div className="mt-[13px] flex h-6 items-center text-[20px] font-medium">
                    <MdError size={24} color="#e50000" /><span className="ml-[10px] w-[49px] pt-[2px]">0</span>
                    <MdLightbulb size={24} color="#ff9800" /><span className="ml-[10px] w-[50px] pt-[2px]">1</span>
                    <MdCheckCircle size={24} color="#0b8a3c" /><span className="ml-[10px] pt-[2px]">1</span>
                  </div>
                </div>
                <div className="flex h-[46px] items-center pb-px pl-[12px]"><MdArrowForward size={24} /><span className="ml-2">Ver todas las verificaciones de estado</span></div>
              </Card>
              <Card className="h-[60px]" />
            </div>
          </div>
        </div>
        <div className="mt-px ml-auto h-[209px] w-[10px] border border-r-0 border-[#b5b5b5] bg-[#c9c9c9]" />
      </div>
    </div>
  );
}

export default function App() {
  return (
    <div className="flex h-[900px] w-[1440px] flex-col overflow-hidden bg-black font-['Inter',sans-serif]">
      <MenuBar />
      <div className="flex h-[877px]">
        <Dock />
        <div className="flex w-[1364px] flex-col overflow-hidden">
          <TabBar />
          <Toolbar />
          <div className="flex h-[784px] shrink-0">
            <PanelBar />
            <div className="flex w-[1329px] flex-col overflow-hidden bg-white font-['Roboto',sans-serif]">
              <ConsoleHeader />
              <div className="flex min-h-0 flex-1"><SideNav /><Main /></div>
            </div>
          </div>
          <StatusBar />
        </div>
      </div>
    </div>
  );
}
